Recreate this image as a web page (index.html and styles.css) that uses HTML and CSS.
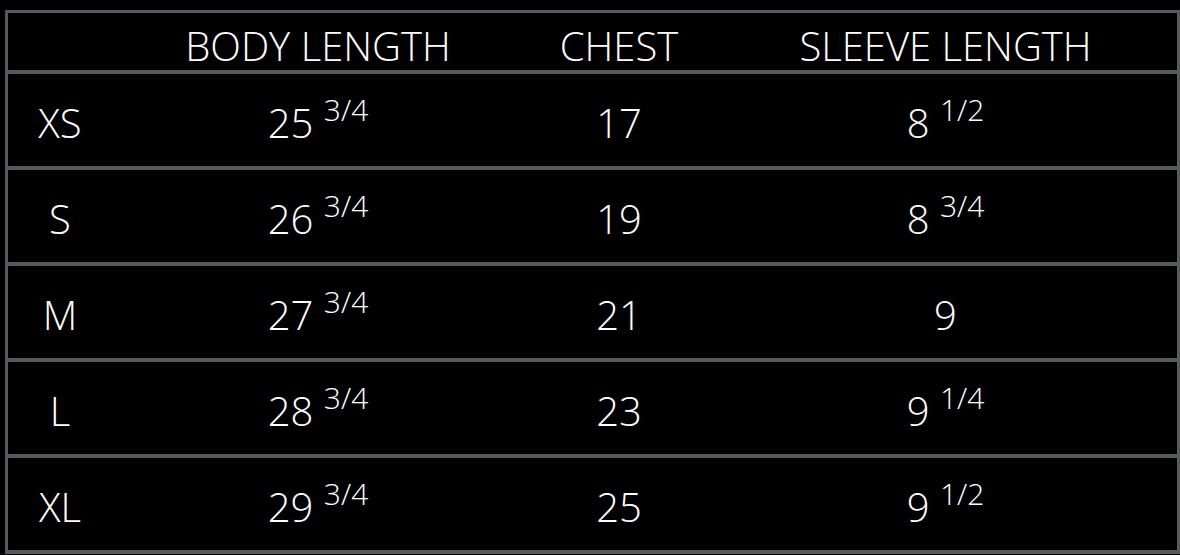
FILE: index.html
```html
<!DOCTYPE html>
<html lang="en">
<head>
<meta charset="utf-8">
<title>Size Chart</title>
<link rel="stylesheet" href="styles.css">
</head>
<body>
<table class="size-chart">
  <colgroup>
    <col class="c-size">
    <col class="c-body">
    <col class="c-chest">
    <col class="c-sleeve">
  </colgroup>
  <thead>
    <tr>
      <th></th>
      <th>BODY LENGTH</th>
      <th>CHEST</th>
      <th>SLEEVE LENGTH</th>
    </tr>
  </thead>
  <tbody>
    <tr>
      <td>XS</td>
      <td>25 <span class="frac">3/4</span></td>
      <td>17</td>
      <td>8 <span class="frac">1/2</span></td>
    </tr>
    <tr>
      <td>S</td>
      <td>26 <span class="frac">3/4</span></td>
      <td>19</td>
      <td>8 <span class="frac">3/4</span></td>
    </tr>
    <tr>
      <td>M</td>
      <td>27 <span class="frac">3/4</span></td>
      <td>21</td>
      <td>9</td>
    </tr>
    <tr>
      <td>L</td>
      <td>28 <span class="frac">3/4</span></td>
      <td>23</td>
      <td>9 <span class="frac">1/4</span></td>
    </tr>
    <tr>
      <td>XL</td>
      <td>29 <span class="frac">3/4</span></td>
      <td>25</td>
      <td>9 <span class="frac">1/2</span></td>
    </tr>
  </tbody>
</table>
</body>
</html>
```
FILE: styles.css
```css
html, body {
  margin: 0;
  padding: 0;
  background: #000;
}

body {
  padding: 10px 0 0 5px;
  font-family: "Open Sans", "Liberation Sans", sans-serif;
  color: #fff;
}

.size-chart {
  width: 1175px;
  table-layout: fixed;
  border-collapse: separate;
  border-spacing: 0;
  border-top: 3px solid #58595c;
  border-left: 3px solid #58595c;
  border-right: 3px solid #58595c;
  border-bottom: 0;
}

.c-size { width: 104px; }
.c-body { width: 412px; }
.c-chest { width: 190px; }
.c-sleeve { width: 463px; }

.size-chart th,
.size-chart td {
  padding: 0;
  text-align: center;
  vertical-align: middle;
  font-size: 40px;
  font-weight: 300;
  line-height: 48px;
  border-bottom: 4px solid #58595c;
  white-space: nowrap;
}

.size-chart th {
  height: 49px;
  padding-top: 8px;
}

.size-chart td {
  height: 86px;
  padding-top: 6px;
}

.frac {
  font-size: 30px;
  line-height: 0;
  vertical-align: 17px;
}
```
